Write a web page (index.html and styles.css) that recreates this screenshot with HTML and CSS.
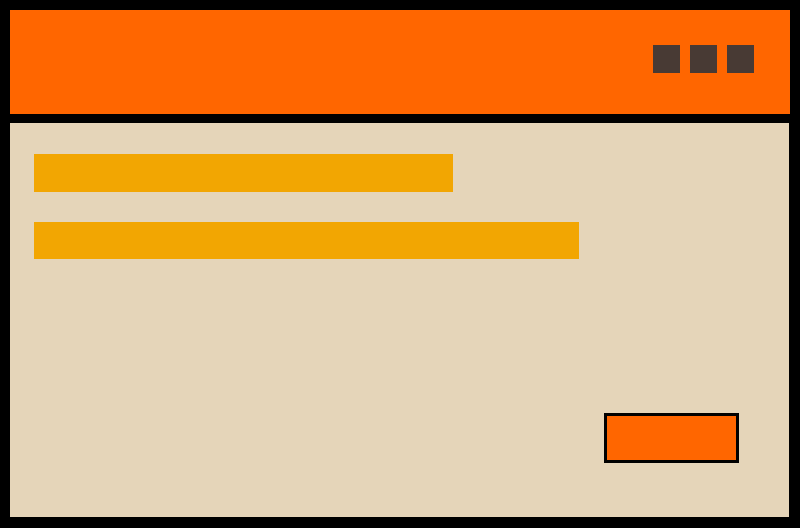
FILE: index.html
```html
<!DOCTYPE html>
<html>
<head>
<meta charset="utf-8">
<link rel="stylesheet" href="styles.css">
</head>
<body>
<div class="frame">
  <header class="header">
    <span class="dot"></span>
    <span class="dot"></span>
    <span class="dot"></span>
  </header>
  <main class="panel">
    <div class="bar bar-short"></div>
    <div class="bar bar-long"></div>
    <div class="button"></div>
  </main>
</div>
</body>
</html>
```

FILE: styles.css
```css
html, body {
  margin: 0;
  padding: 0;
  background: #000;
  width: 800px;
  height: 528px;
  overflow: hidden;
}
.frame {
  box-sizing: border-box;
  width: 800px;
  height: 528px;
  padding: 10px 10px 11px 10px;
  display: flex;
  flex-direction: column;
  gap: 9px;
}
.header {
  box-sizing: border-box;
  height: 104px;
  background: #ff6600;
  display: flex;
  justify-content: flex-end;
  align-items: flex-start;
  gap: 10px;
  padding: 35px 36px 0 0;
}
.dot {
  width: 27px;
  height: 28px;
  background: #483a34;
}
.panel {
  box-sizing: border-box;
  flex: 1;
  width: 779px;
  background: #e5d5b9;
  display: flex;
  flex-direction: column;
  align-items: flex-start;
  padding: 31px 50px 54px 24px;
}
.bar {
  background: #f2a602;
}
.bar-short {
  width: 419px;
  height: 38px;
}
.bar-long {
  margin-top: 30px;
  width: 545px;
  height: 37px;
}
.button {
  margin-top: auto;
  align-self: flex-end;
  box-sizing: border-box;
  width: 135px;
  height: 50px;
  border: 3px solid #000;
  background: #ff6600;
}
```
